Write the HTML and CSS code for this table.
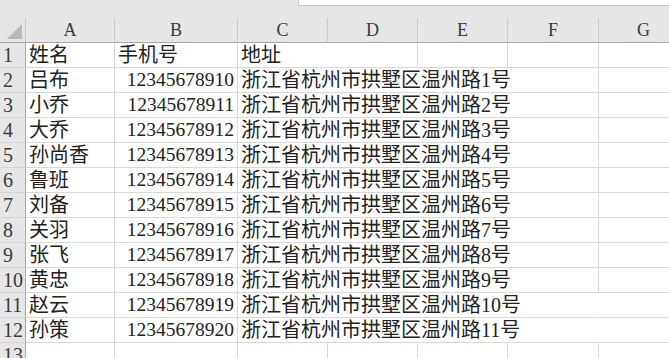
FILE: index.html
```html
<!DOCTYPE html>
<html lang="zh-CN">
<head>
<meta charset="utf-8">
<link rel="stylesheet" href="styles.css">
</head>
<body>
<div class="topbar"><div class="namebox"></div></div>
<div class="sheet">
  <div class="corner"><div class="tri"></div></div>
  <div class="ch">A</div><div class="ch">B</div><div class="ch">C</div><div class="ch">D</div><div class="ch">E</div><div class="ch">F</div><div class="ch">G</div>

  <div class="rh">1</div><div class="c">姓名</div><div class="c">手机号</div><div class="c ov">地址</div><div class="c"></div><div class="c"></div><div class="c"></div><div class="c"></div>
  <div class="rh">2</div><div class="c">吕布</div><div class="c num">12345678910</div><div class="c ov">浙江省杭州市拱墅区温州路1号</div><div class="c hid"></div><div class="c hid"></div><div class="c f"></div><div class="c"></div>
  <div class="rh">3</div><div class="c">小乔</div><div class="c num">12345678911</div><div class="c ov">浙江省杭州市拱墅区温州路2号</div><div class="c hid"></div><div class="c hid"></div><div class="c f"></div><div class="c"></div>
  <div class="rh">4</div><div class="c">大乔</div><div class="c num">12345678912</div><div class="c ov">浙江省杭州市拱墅区温州路3号</div><div class="c hid"></div><div class="c hid"></div><div class="c f"></div><div class="c"></div>
  <div class="rh">5</div><div class="c">孙尚香</div><div class="c num">12345678913</div><div class="c ov">浙江省杭州市拱墅区温州路4号</div><div class="c hid"></div><div class="c hid"></div><div class="c f"></div><div class="c"></div>
  <div class="rh">6</div><div class="c">鲁班</div><div class="c num">12345678914</div><div class="c ov">浙江省杭州市拱墅区温州路5号</div><div class="c hid"></div><div class="c hid"></div><div class="c f"></div><div class="c"></div>
  <div class="rh">7</div><div class="c">刘备</div><div class="c num">12345678915</div><div class="c ov">浙江省杭州市拱墅区温州路6号</div><div class="c hid"></div><div class="c hid"></div><div class="c f"></div><div class="c"></div>
  <div class="rh">8</div><div class="c">关羽</div><div class="c num">12345678916</div><div class="c ov">浙江省杭州市拱墅区温州路7号</div><div class="c hid"></div><div class="c hid"></div><div class="c f"></div><div class="c"></div>
  <div class="rh">9</div><div class="c">张飞</div><div class="c num">12345678917</div><div class="c ov">浙江省杭州市拱墅区温州路8号</div><div class="c hid"></div><div class="c hid"></div><div class="c f"></div><div class="c"></div>
  <div class="rh">10</div><div class="c">黄忠</div><div class="c num">12345678918</div><div class="c ov">浙江省杭州市拱墅区温州路9号</div><div class="c hid"></div><div class="c hid"></div><div class="c f"></div><div class="c"></div>
  <div class="rh">11</div><div class="c">赵云</div><div class="c num">12345678919</div><div class="c ov">浙江省杭州市拱墅区温州路10号</div><div class="c hid"></div><div class="c hid"></div><div class="c hid"></div><div class="c"></div>
  <div class="rh">12</div><div class="c">孙策</div><div class="c num">12345678920</div><div class="c ov">浙江省杭州市拱墅区温州路11号</div><div class="c hid"></div><div class="c hid"></div><div class="c hid"></div><div class="c"></div>
  <div class="rh">13</div><div class="c"></div><div class="c"></div><div class="c"></div><div class="c"></div><div class="c"></div><div class="c"></div><div class="c"></div>
</div>
</body>
</html>
```

FILE: styles.css
```css
html, body {
  margin: 0;
  padding: 0;
  background: #ffffff;
  overflow: hidden;
}

.topbar {
  height: 18px;
  background: #e6e6e6;
  display: flex;
}

.namebox {
  margin-left: 298px;
  flex: 1;
  height: 5px;
  background: #ffffff;
  border-left: 1px solid #c8c8c8;
  border-bottom: 1px solid #c8c8c8;
}

.sheet {
  display: grid;
  grid-template-columns: 26px 89px 123px 90px 90px 90px 91px 90px;
  grid-auto-rows: 25px;
  font-family: "Liberation Serif", "Noto Sans CJK SC", serif;
  font-weight: 400;
  color: #222222;
}

.corner {
  background: #e6e6e6;
  border-right: 1px solid #c8c8c8;
  border-bottom: 1px solid #a8a8a8;
  box-sizing: border-box;
  position: relative;
}

.tri {
  position: absolute;
  right: 3px;
  bottom: 3px;
  width: 0;
  height: 0;
  border-left: 15px solid transparent;
  border-bottom: 15px solid #b9b9b9;
}

.ch {
  background: #e6e6e6;
  border-right: 1px solid #cbcbcb;
  border-bottom: 1px solid #a8a8a8;
  box-sizing: border-box;
  text-align: center;
  font-size: 18px;
  line-height: 24px;
  color: #3a3a3a;
}

.rh {
  background: #e6e6e6;
  border-right: 1px solid #a8a8a8;
  border-bottom: 1px solid #d2d2d2;
  box-sizing: border-box;
  font-size: 20px;
  line-height: 24px;
  padding-left: 3px;
  color: #3a3a3a;
  white-space: nowrap;
}

.c {
  border-right: 1px solid #d8d8d8;
  border-bottom: 1px solid #d8d8d8;
  box-sizing: border-box;
  font-size: 20px;
  line-height: 24px;
  padding-left: 3px;
  white-space: nowrap;
  overflow: visible;
}

.num {
  text-align: right;
  padding-left: 0;
  padding-right: 3px;
  font-size: 19.5px;
}

.ov {
  border-right-color: transparent;
  position: relative;
  z-index: 1;
}

.hid {
  border-right-color: transparent;
}

.f {
  border-right-color: #d8d8d8;
}
```
